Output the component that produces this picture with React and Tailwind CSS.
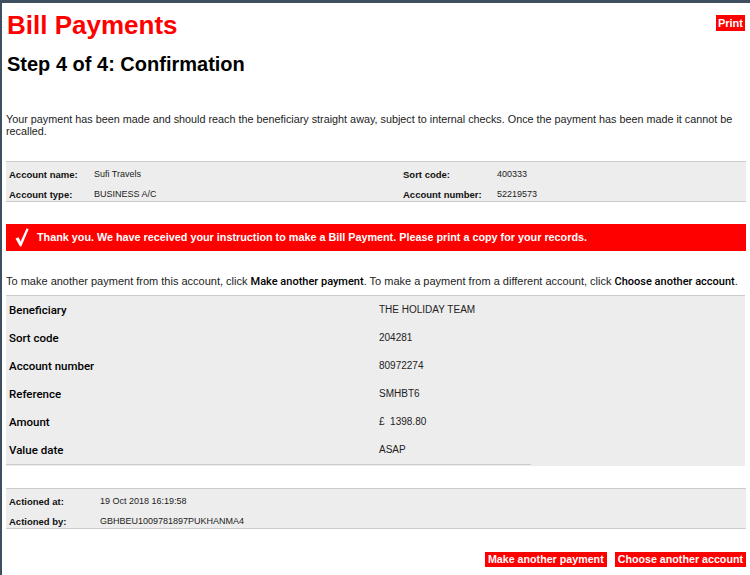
import React from "react";

const sans = { fontFamily: '"Liberation Sans", Arial, sans-serif' };

function Check() {
  return (
    <svg width="14" height="19" viewBox="0 0 14 19" className="shrink-0">
      <path d="M0.5 10.5 L3.6 9.2 L5.6 13.6 L11.6 0.3 L13.6 1.2 L6.3 18.6 L5 18.6 Z" fill="#ffffff" />
    </svg>
  );
}

function SmallPanel({ rows, cols }) {
  return (
    <div className="h-[41px] border-y border-[#cccccc] bg-[#ededed] pt-[3px]">
      {rows.map((r, i) => (
        <div key={i} className={`grid ${cols} h-[20px] leading-[20px]`}>
          {r.map((c, j) => (
            <div
              key={j}
              className={
                j % 2 === 0
                  ? "pl-[3px] text-[9.5px] font-bold text-[#111111]"
                  : "pl-[3px] text-[9px] text-[#222222] -translate-y-[1px]"
              }
            >
              {c}
            </div>
          ))}
        </div>
      ))}
    </div>
  );
}

export default function App() {
  const details = [
    ["Beneficiary", "THE HOLIDAY TEAM"],
    ["Sort code", "204281"],
    ["Account number", "80972274"],
    ["Reference", "SMHBT6"],
    ["Amount", "£\u00a0\u00a01398.80"],
    ["Value date", "ASAP"],
  ];
  return (
    <div
      className="w-[750px] h-[575px] overflow-hidden bg-white border-t-[3px] border-l-2 border-[#3e5060]"
      style={sans}
    >
      <div className="pl-[4px] pr-[4px]">
        <div className="flex items-start justify-between mt-[7px]">
          <h1 className="text-[26px] leading-[30px] font-bold text-[#ff0000] pl-[1px]">Bill Payments</h1>
          <button className="mt-[5px] h-[16px] bg-[#ff0000] text-white text-[11px] font-bold leading-[16px] px-[2px] mr-[1px]">
            Print
          </button>
        </div>
        <h2 className="mt-[12px] text-[20px] leading-[24px] font-bold text-black pl-[1px]">
          Step 4 of 4: Confirmation
        </h2>
        <p className="mt-[37px] text-[10.8px] leading-[12px] text-[#222222]">
          Your payment has been made and should reach the beneficiary straight away, subject to internal checks. Once the payment has been made it cannot be recalled.
        </p>

        <div className="mt-[24px]">
          <SmallPanel
            cols="grid-cols-[85px_309px_94px_1fr]"
            rows={[
              ["Account name:", "Sufi Travels", "Sort code:", "400333"],
              ["Account type:", "BUSINESS A/C", "Account number:", "52219573"],
            ]}
          />
        </div>

        <div className="mt-[22px] h-[27px] bg-[#ff0000] flex items-center pl-[9px] gap-[8px]">
          <Check />
          <span className="text-white text-[10.8px] font-bold">
            Thank you. We have received your instruction to make a Bill Payment. Please print a copy for your records.
          </span>
        </div>

        <p className="mt-[24px] text-[11px] leading-[13px] text-[#222222] whitespace-nowrap">
          To make another payment from this account, click{" "}
          <span className="font-medium text-black" style={{ fontFamily: "Roboto, sans-serif" }}>Make another payment</span>. To make a payment from a different account, click{" "}
          <span className="font-medium text-black" style={{ fontFamily: "Roboto, sans-serif" }}>Choose another account</span>.
        </p>

        <div className="mt-[7px] border-t border-[#cccccc] bg-[#ededed] mr-[1px]">
          {details.map(([k, v]) => (
            <div key={k} className="grid grid-cols-[370px_1fr] h-[28px] leading-[28px]">
              <div className="pl-[3px] text-[11.5px] font-medium text-black" style={{ fontFamily: "Roboto, sans-serif" }}>
                {k}
              </div>
              <div className="pl-[3px] text-[10px] text-[#222222]">{v}</div>
            </div>
          ))}
          <div className="h-[2px]">
            <div className="w-[525px] h-px bg-[#cccccc]" />
          </div>
        </div>

        <div className="mt-[22px]">
          <SmallPanel
            cols="grid-cols-[91px_1fr]"
            rows={[
              ["Actioned at:", "19 Oct 2018 16:19:58"],
              ["Actioned by:", "GBHBEU1009781897PUKHANMA4"],
            ]}
          />
        </div>

        <div className="mt-[23px] flex justify-end gap-[8px]">
          <button className="h-[15px] bg-[#ff0000] text-white text-[10.7px] font-bold leading-[15px] px-[3px]">
            Make another payment
          </button>
          <button className="h-[15px] bg-[#ff0000] text-white text-[10.7px] font-bold leading-[15px] px-[3px]">
            Choose another account
          </button>
        </div>
      </div>
    </div>
  );
}
